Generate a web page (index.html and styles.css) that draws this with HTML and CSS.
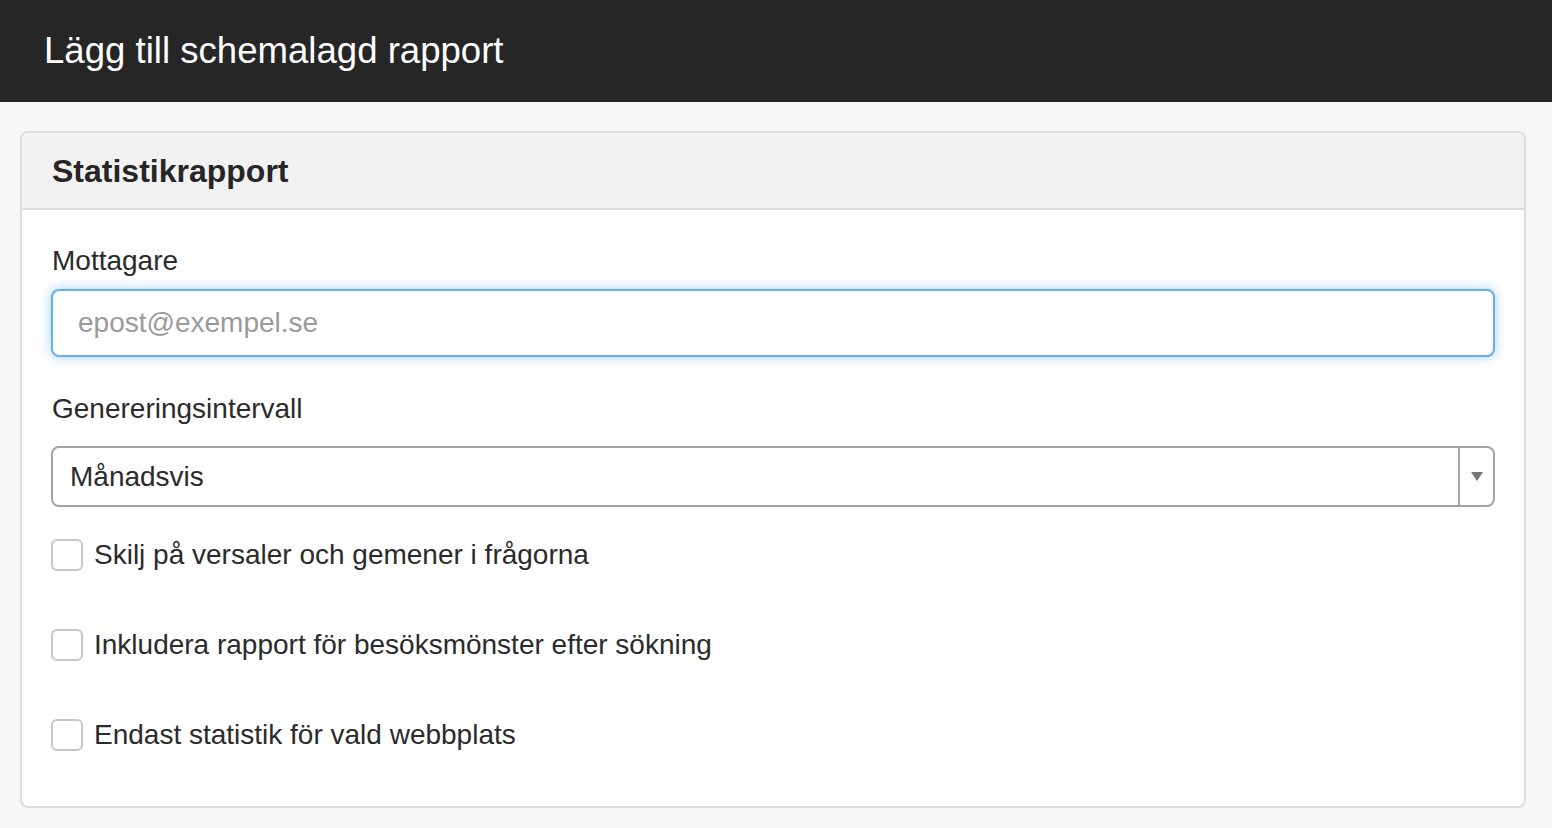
FILE: index.html
```html
<!DOCTYPE html>
<html lang="sv">
<head>
<meta charset="utf-8">
<title>Lägg till schemalagd rapport</title>
<link rel="stylesheet" href="styles.css">
</head>
<body>
<header class="topbar">
  <h1 class="topbar-title">Lägg till schemalagd rapport</h1>
</header>
<main class="page">
  <section class="panel">
    <div class="panel-heading">
      <h2 class="panel-title">Statistikrapport</h2>
    </div>
    <div class="panel-body">
      <div class="form-group">
        <label class="field-label" for="recipients">Mottagare</label>
        <input class="text-input" id="recipients" type="text" placeholder="epost@exempel.se">
      </div>
      <div class="form-group">
        <label class="field-label" for="interval">Genereringsintervall</label>
        <div class="select">
          <span class="select-value">Månadsvis</span>
          <span class="select-arrow"><span class="triangle"></span></span>
        </div>
      </div>
      <div class="checks">
        <label class="check"><span class="box"></span><span class="check-text">Skilj på versaler och gemener i frågorna</span></label>
        <label class="check"><span class="box"></span><span class="check-text">Inkludera rapport för besöksmönster efter sökning</span></label>
        <label class="check"><span class="box"></span><span class="check-text">Endast statistik för vald webbplats</span></label>
      </div>
    </div>
  </section>
</main>
</body>
</html>
```

FILE: styles.css
```css
* { box-sizing: border-box; }
html, body { margin: 0; padding: 0; }
body {
  background: #f7f7f7;
  font-family: "Liberation Sans", Arial, Helvetica, sans-serif;
  color: #333;
  width: 1552px;
  height: 828px;
  overflow: hidden;
}
.topbar {
  background: #262626;
  height: 102px;
  display: flex;
  align-items: center;
  padding-left: 44px;
}
.topbar-title {
  margin: 0;
  color: #fff;
  font-weight: 400;
  font-size: 36.6px;
  line-height: 1;
}
.page {
  padding: 29px 26px 0 20px;
}
.panel {
  background: #fff;
  border: 2px solid #dddddd;
  border-radius: 8px;
  overflow: hidden;
}
.panel-heading {
  background: #f2f2f2;
  border-bottom: 2px solid #dddddd;
  height: 77px;
  display: flex;
  align-items: center;
  padding-left: 30px;
}
.panel-title {
  margin: 0;
  font-size: 32px;
  font-weight: 700;
  color: #262626;
  line-height: 1;
}
.panel-body {
  padding: 34px 29px 55px 29px;
}
.form-group {
  display: flex;
  flex-direction: column;
}
.form-group + .form-group { margin-top: 35px; }
.field-label {
  font-size: 28px;
  line-height: 34px;
  color: #2b2b2b;
  margin-left: 1px;
  margin-bottom: 11px;
}
.text-input {
  height: 68px;
  border: 2px solid #66afe9;
  border-radius: 8px;
  box-shadow: 0 0 12px rgba(102, 175, 233, 0.6);
  font-family: inherit;
  font-size: 28px;
  padding: 0 25px;
  color: #333;
  outline: none;
}
.text-input::placeholder { color: #9a9a9a; }
.select {
  height: 61px;
  border: 2px solid #a3a3a3;
  border-radius: 8px;
  display: flex;
  align-items: stretch;
  margin-top: 9px;
}
.select-value {
  flex: 1;
  display: flex;
  align-items: center;
  padding-left: 17px;
  font-size: 28px;
  color: #2b2b2b;
}
.select-arrow {
  width: 35px;
  border-left: 2px solid #a3a3a3;
  display: flex;
  align-items: center;
  justify-content: center;
}
.triangle {
  width: 0;
  height: 0;
  border-left: 6px solid transparent;
  border-right: 6px solid transparent;
  border-top: 9px solid #777;
}
.checks {
  display: flex;
  flex-direction: column;
  gap: 58px;
  margin-top: 32px;
}
.check {
  display: flex;
  align-items: center;
  gap: 11px;
  height: 32px;
}
.box {
  width: 32px;
  height: 32px;
  border: 2px solid #c8c8c8;
  border-radius: 6px;
  background: #fff;
  flex: none;
}
.check-text {
  font-size: 28px;
  color: #2b2b2b;
}
```
